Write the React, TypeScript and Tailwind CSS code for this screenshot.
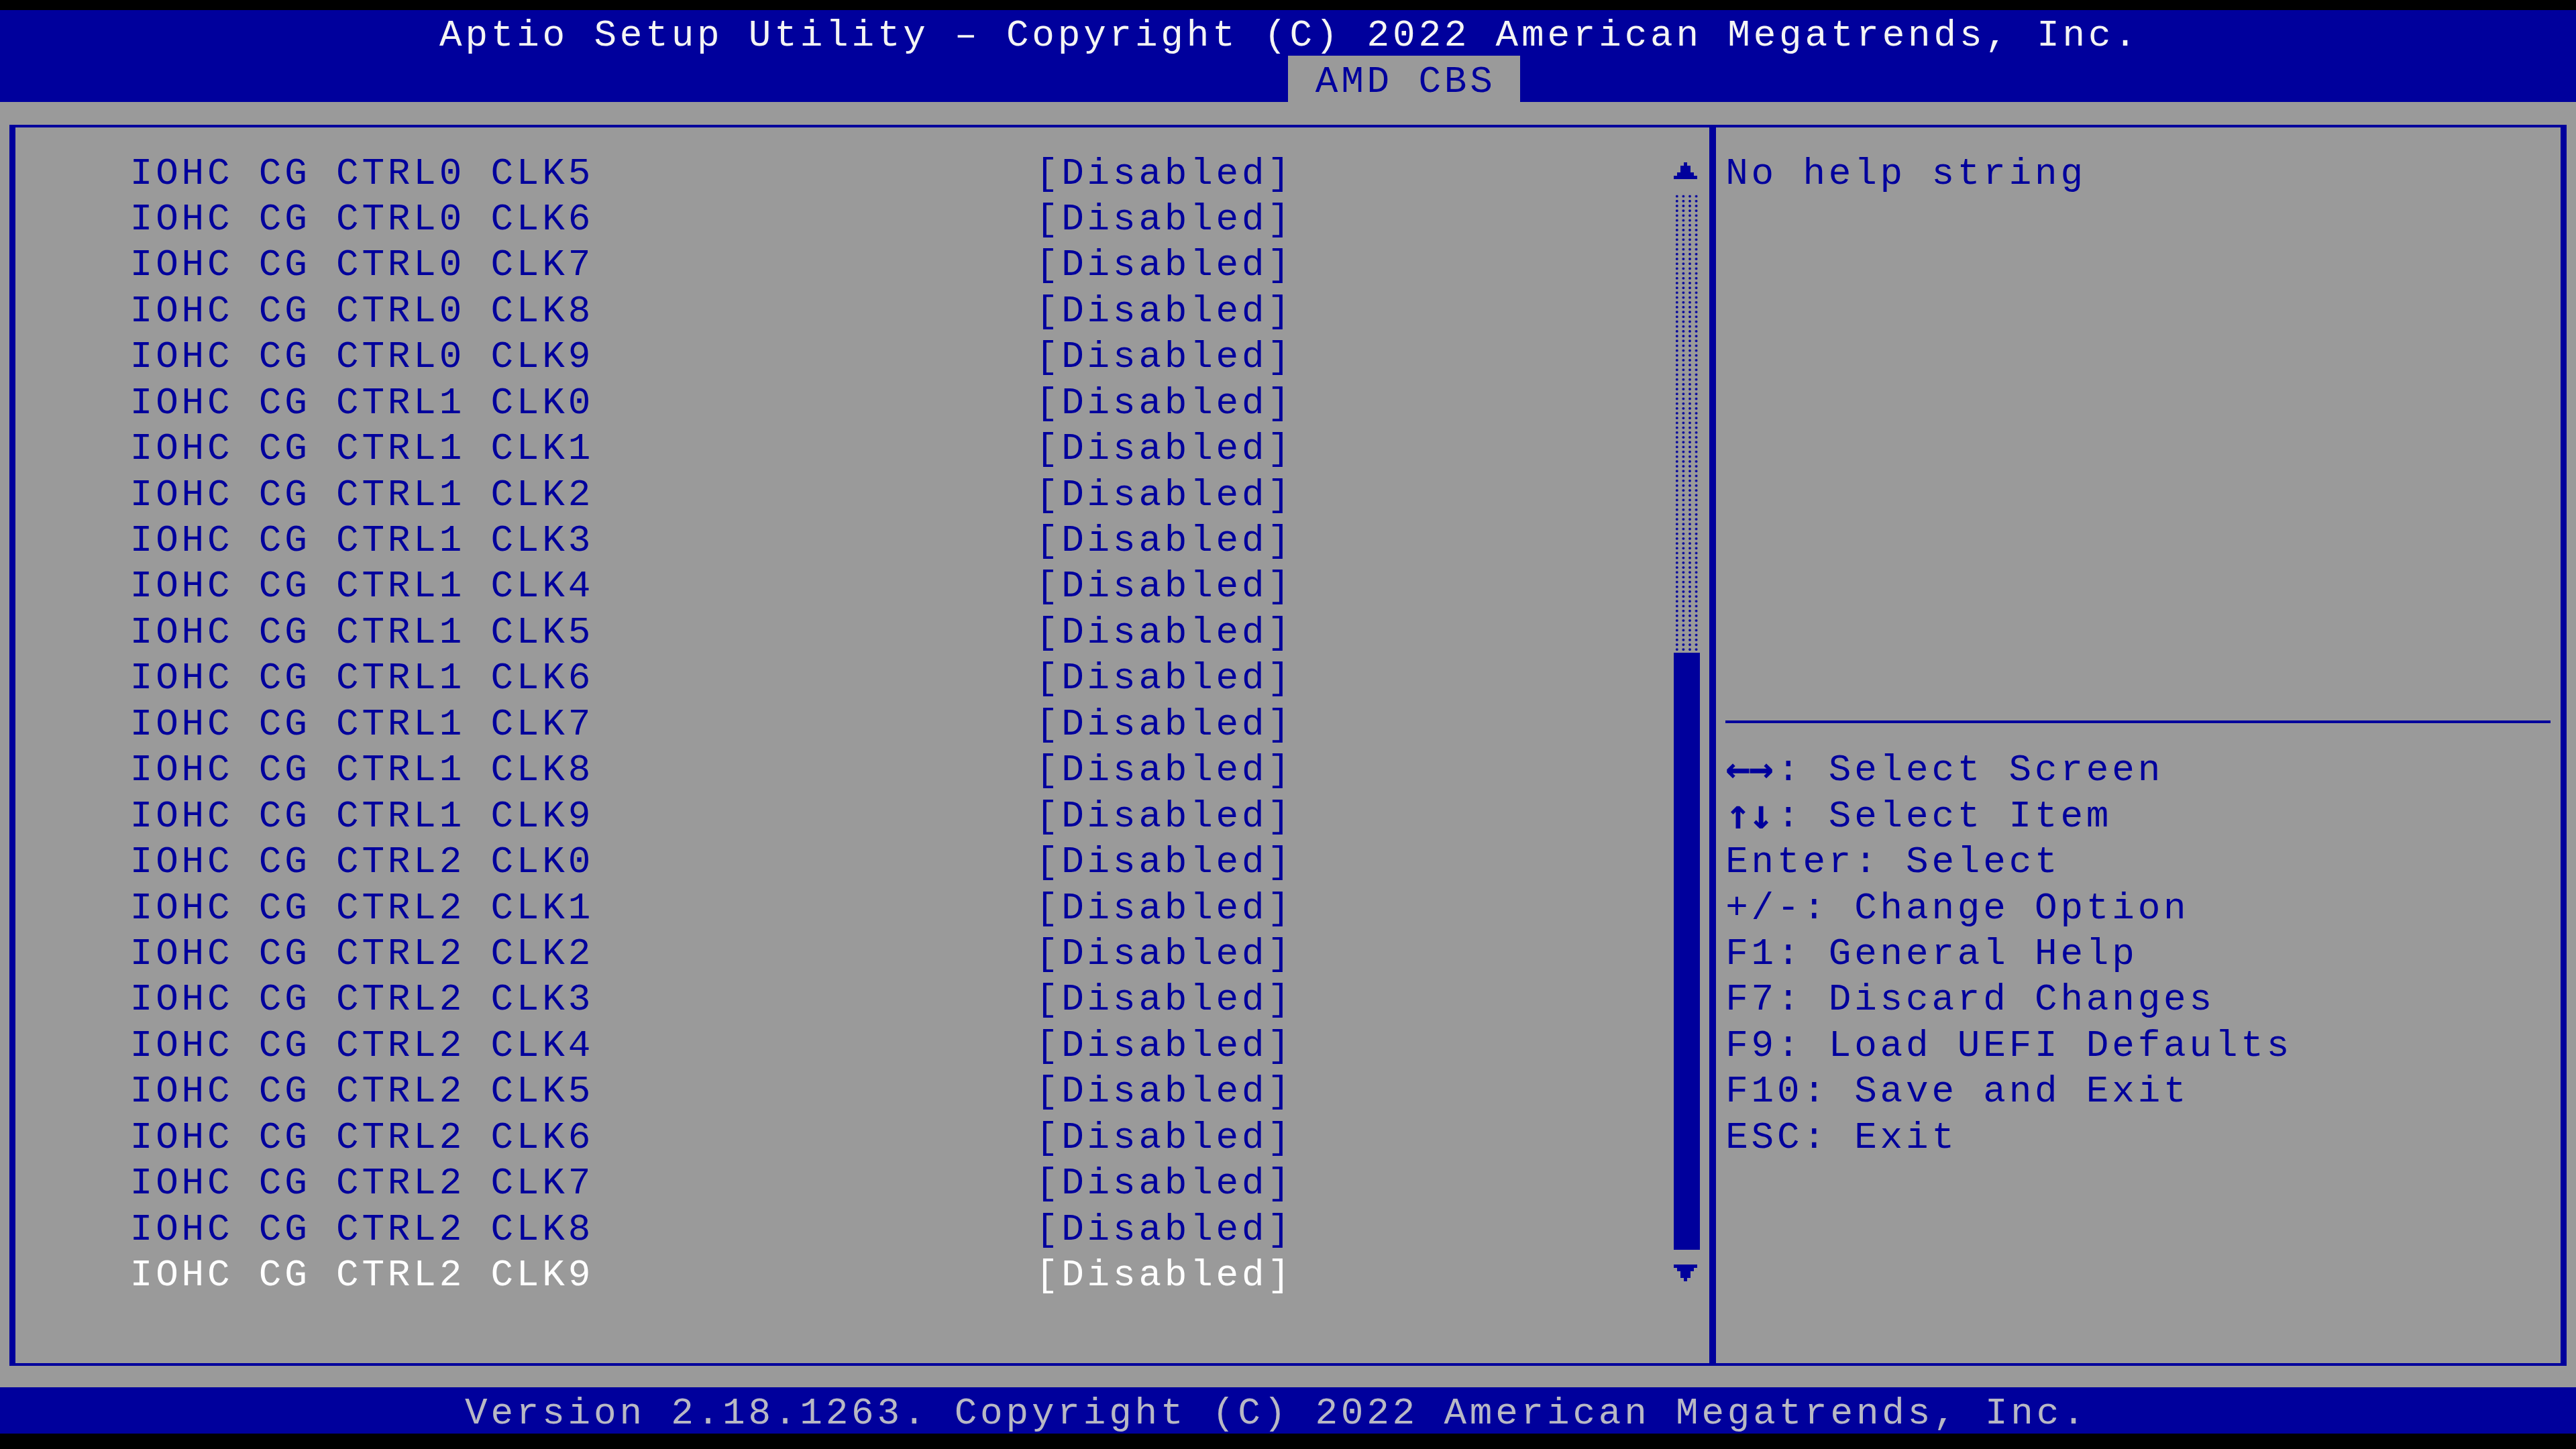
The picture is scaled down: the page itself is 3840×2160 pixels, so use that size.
import React from 'react';

// Text-mode grid: 100 columns x 31 rows
// column = 38.4px, row = 68.45px

const items = [
  ...[5, 6, 7, 8, 9].map((n) => `IOHC CG CTRL0 CLK${n}`),
  ...[0, 1, 2, 3, 4, 5, 6, 7, 8, 9].map((n) => `IOHC CG CTRL1 CLK${n}`),
  ...[0, 1, 2, 3, 4, 5, 6, 7, 8, 9].map((n) => `IOHC CG CTRL2 CLK${n}`)
];

const keys = [
  { k: '←→', rest: ': Select Screen', bold: true },
  { k: '↑↓', rest: ': Select Item', bold: true },
  { k: 'Enter', rest: ': Select' },
  { k: '+/-', rest: ': Change Option' },
  { k: 'F1', rest: ': General Help' },
  { k: 'F7', rest: ': Discard Changes' },
  { k: 'F9', rest: ': Load UEFI Defaults' },
  { k: 'F10', rest: ': Save and Exit' },
  { k: 'ESC', rest: ': Exit' }
];

const Arrow = ({ down }: { down?: boolean }) => (
  <svg
    width="35"
    height="25"
    viewBox="0 0 7 5"
    shapeRendering="crispEdges"
    className={down ? 'rotate-180' : ''}
  >
    <path
      d="M3 0H4V1H5V2H5V3H6V4H7V5H0V4H1V3H2V2H2V1H3Z"
      fill="#00009c"
    />
  </svg>
);

const Row = ({ children }: { children?: React.ReactNode }) => (
  <div className="h-[68.45px] flex items-center pt-[8px] whitespace-pre">
    {children}
  </div>
);

export default function App() {
  return (
    <div className="w-[3840px] h-[2160px] bg-black flex flex-col pt-[15px] overflow-hidden font-['Liberation_Mono',monospace] text-[56px] tracking-[4.8px] leading-none">
      {/* title bar */}
      <div className="h-[68.45px] bg-[#00009c] flex items-center pl-[655px] pt-[8px] text-[#f4f4f4] whitespace-pre">
        Aptio Setup Utility – Copyright (C) 2022 American Megatrends, Inc.
      </div>

      {/* tab strip */}
      <div className="h-[68.45px] bg-[#00009c] flex">
        <div className="ml-[1920px] w-[345.6px] h-full bg-[#9a9a9a] text-[#00009c] flex items-center pl-[40.8px] pt-[8px] whitespace-pre">
          AMD CBS
        </div>
      </div>

      {/* main screen */}
      <div className="h-[1916.6px] bg-[#9a9a9a] px-[14.4px] pt-[34.1px]">
        <div className="border-x-[9.6px] border-y-[4px] border-[#00009c] flex">
          {/* settings list */}
          <div className="w-[2524.8px] flex pr-[14.4px] pt-[30.35px] pb-[32.45px]">
            <div className="flex-1 pl-[170.4px] text-[#00009c]">
              {items.map((name, i) => {
                const sel = i === items.length - 1;
                return (
                  <Row key={name}>
                    <span className={`w-[1350px] ${sel ? 'text-white' : ''}`}>{name}</span>
                    <span className={sel ? 'text-white' : ''}>[Disabled]</span>
                  </Row>
                );
              })}
              <Row />
            </div>

            {/* scroll bar */}
            <div className="w-[38.4px] flex flex-col">
              <div className="h-[68.45px] flex items-center">
                <Arrow />
              </div>
              <div className="h-[684.5px] bg-[radial-gradient(circle,#00009c_1.4px,transparent_2.2px)] bg-size-[9.6px_7.2px]" />
              <div className="h-[889.85px] bg-[#00009c]" />
              <div className="h-[68.45px] flex items-center">
                <Arrow down />
              </div>
              <div className="h-[68.45px]" />
            </div>
          </div>

          <div className="w-[9.6px] bg-[#00009c]" />

          {/* help panel */}
          <div className="flex-1 px-[14.4px] pt-[30.35px] text-[#00009c]">
            <Row>No help string</Row>
            {Array.from({ length: 11 }).map((_, i) => (
              <Row key={i} />
            ))}
            <div className="h-[68.45px] flex items-center">
              <div className="h-[4px] w-full bg-[#00009c]" />
            </div>
            {keys.map((k) => (
              <Row key={k.k}>
                {k.bold ? (
                  <span className="w-[76.8px] h-[50px] flex items-center font-['DejaVu_Sans_Mono',monospace] font-bold text-[62px] leading-[50px] tracking-[-3px] -mt-[6px]">
                    {k.k}
                  </span>
                ) : (
                  <span>{k.k}</span>
                )}
                {k.rest}
              </Row>
            ))}
          </div>
        </div>
      </div>

      {/* version bar */}
      <div className="h-[68.45px] bg-[#00009c] flex items-center pl-[693px] pt-[8px] text-[#b8b8c4] whitespace-pre">
        Version 2.18.1263. Copyright (C) 2022 American Megatrends, Inc.
      </div>
    </div>
  );
}
